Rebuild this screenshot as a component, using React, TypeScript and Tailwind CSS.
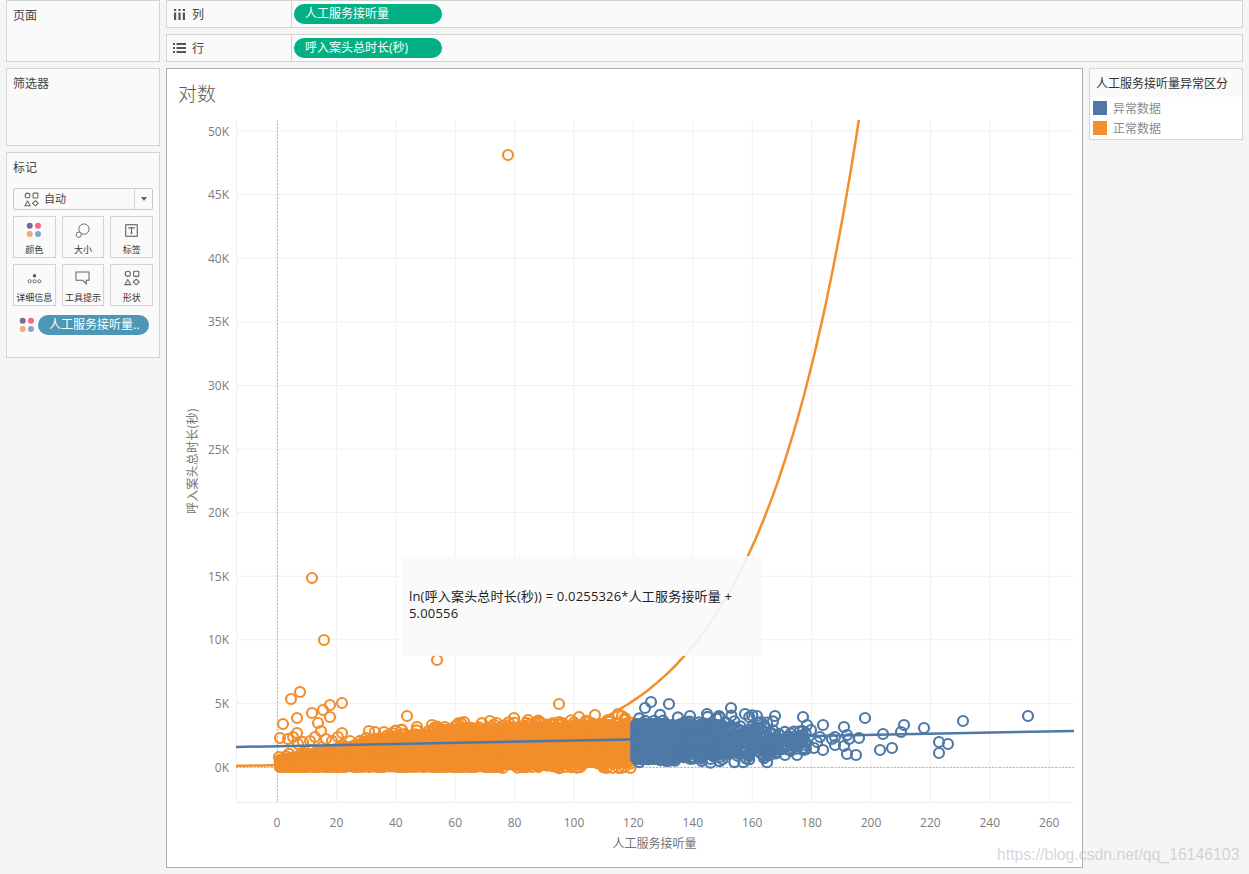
import React from "react";

const ORANGE = "#f28e2b";
const BLUE = "#4e79a7";
const FONT = "font-['Open_Sans','Noto_Sans_CJK_SC',sans-serif]";

function rng(seed: number) {
  let s = seed;
  return () => {
    s = (s * 1664525 + 1013904223) % 4294967296;
    return s / 4294967296;
  };
}

const px = (n: number) => 277 + 2.97 * n;

const orangeOutliers: number[][] = [
  [508, 155], [312, 578], [324, 640], [437, 660], [291, 699], [300, 692], [283, 724], [297, 718], [312, 713],
  [323, 710], [330, 705], [342, 703], [330, 717], [318, 723], [321, 731], [297, 733], [280, 738], [288, 739],
  [342, 733], [338, 737], [303, 742], [315, 737], [293, 737], [279, 757], [326, 739], [310, 741], [298, 744],
  [332, 741], [350, 741], [407, 716], [559, 704], [514, 718], [579, 717], [595, 715], [618, 714], [432, 725],
  [464, 722], [490, 721], [505, 725], [369, 731], [375, 732], [392, 733], [402, 730], [417, 727], [445, 727],
  [457, 725], [540, 722], [553, 723], [565, 726], [608, 720], [625, 718], [622, 716], [528, 720],
];

const blueOutliers: number[][] = [
  [651, 702], [669, 704], [645, 708], [731, 708], [865, 718], [803, 717], [823, 725], [844, 727], [904, 725],
  [901, 732], [924, 728], [883, 734], [963, 721], [1028, 716], [939, 742], [948, 744], [939, 753], [892, 748],
  [880, 750], [856, 755], [847, 754], [844, 746], [835, 745], [823, 750], [814, 748], [849, 739], [859, 738],
  [847, 735], [835, 737], [832, 739], [820, 737], [817, 742], [811, 730], [807, 725], [785, 755], [797, 755],
  [803, 750], [800, 743], [775, 716], [757, 716], [745, 714], [690, 716], [707, 714], [719, 716],
];

function bandTop(n: number) {
  if (n < 22) return 761 - (n / 22) * 13;
  if (n < 40) return 748 - ((n - 22) / 18) * 9;
  if (n < 60) return 739 - ((n - 40) / 20) * 7;
  return 732 - ((n - 60) / 60) * 5;
}

function orangePoints() {
  const r = rng(7);
  const pts: number[][] = [];
  for (let n = 1; n <= 119; n++) {
    const top = bandTop(n);
    const bottom = n <= 75 ? 767 : n <= 100 ? 762 + r() * 5 : 759 + r() * 7;
    const count = 16;
    for (let i = 0; i <= count; i++) {
      const y = top + ((bottom - top) * i) / count;
      pts.push([px(n), Math.min(767, y + (r() - 0.5) * 2)]);
    }
    if (n > 28) {
      pts.push([px(n), top - r() * 5]);
      if (r() > 0.35) pts.push([px(n), top - r() * 9]);
    } else if (r() > 0.5) {
      pts.push([px(n), top - r() * 5]);
    }
    if (n > 75 && r() > 0.6) pts.push([px(n), 767 + r() * 1.5]);
  }
  return pts;
}

function bluePoints() {
  const r = rng(23);
  const pts: number[][] = [];
  for (let n = 121; n <= 178; n++) {
    const count = n <= 150 ? 16 : n <= 168 ? 8 : 5;
    const top = n <= 150 ? 724 : n <= 168 ? 726 : 731;
    const bot = n <= 150 ? 759 : n <= 168 ? 756 : 751;
    for (let i = 0; i < count; i++) {
      const y = n <= 131 ? top + ((bot - top) * i) / (count - 1) : top + (bot - top) * r();
      pts.push([px(n), y]);
    }
    if (n <= 168 && r() > 0.45) pts.push([px(n), 723 - r() * 9]);
    if (n <= 168 && r() > 0.5) pts.push([px(n), 758 + r() * 5]);
  }
  return pts;
}

function curvePath() {
  let d = "";
  for (let n = -14; n <= 197; n += 1) {
    const v = Math.exp(4.96 + 0.03 * n);
    const y = 767 - (v / 1000) * 12.72;
    d += `${d ? "L" : "M"}${px(n).toFixed(1)} ${y.toFixed(1)}`;
  }
  return d;
}

function Chart() {
  const yTicks = Array.from({ length: 11 }, (_, i) => i * 5);
  const xTicks = Array.from({ length: 14 }, (_, i) => i * 20);
  const oPts = orangePoints();
  const bPts = bluePoints();
  return (
    <svg width={915} height={749} viewBox="167 118 915 749" className="block">
      <defs>
        <clipPath id="plot">
          <rect x="236" y="120" width="838" height="682" />
        </clipPath>
      </defs>
      {yTicks.map((t) => (
        <line key={t} x1={236} x2={1074} y1={767 - t * 12.72} y2={767 - t * 12.72} stroke="#f0f0f0" />
      ))}
      {xTicks.map((t) => (
        <line key={t} x1={px(t)} x2={px(t)} y1={120} y2={802} stroke="#f0f0f0" />
      ))}
      <line x1={236.5} x2={236.5} y1={120} y2={802} stroke="#f0f0f0" />
      <line x1={236} x2={1074} y1={802.5} y2={802.5} stroke="#ececec" />
      <line x1={277.5} x2={277.5} y1={120} y2={802} stroke="#b5b5b5" strokeDasharray="2 1.5" />
      <line x1={236} x2={1074} y1={767.5} y2={767.5} stroke="#b5b5b5" strokeDasharray="2 1.5" />

      <g fill="none" stroke={ORANGE} strokeWidth={2.2}>
        {oPts.map((p, i) => (
          <circle key={i} cx={p[0]} cy={p[1]} r={5} />
        ))}
        {orangeOutliers.map((p, i) => (
          <circle key={i} cx={p[0]} cy={p[1]} r={5} />
        ))}
      </g>
      <g fill="none" stroke={BLUE} strokeWidth={2.2}>
        {bPts.map((p, i) => (
          <circle key={i} cx={p[0]} cy={p[1]} r={5} />
        ))}
        {blueOutliers.map((p, i) => (
          <circle key={i} cx={p[0]} cy={p[1]} r={5} />
        ))}
      </g>
      <g clipPath="url(#plot)" fill="none" strokeWidth={2.5}>
        <path d={curvePath()} stroke={ORANGE} />
        <line x1={236} y1={747} x2={1074} y2={731} stroke={BLUE} />
      </g>

      <g className="font-['Open_Sans',sans-serif]" fontSize={12} fill="#7c7c7c">
        {yTicks.map((t) => (
          <text key={t} x={229} y={767 - t * 12.72 + 4.5} textAnchor="end">
            {t}K
          </text>
        ))}
        {xTicks.map((t) => (
          <text key={t} x={px(t)} y={827} textAnchor="middle">
            {t}
          </text>
        ))}
      </g>
      <g className="font-['Noto_Sans_CJK_SC',sans-serif]" fontSize={12} fill="#747474">
        <text x={654.5} y={848} textAnchor="middle">
          人工服务接听量
        </text>
        <text transform="translate(197 461) rotate(-90)" textAnchor="middle" letterSpacing={0.2}>
          呼入案头总时长(秒)
        </text>
      </g>
    </svg>
  );
}

function Panel({ title, className }: { title: string; className: string }) {
  return (
    <div className={`border border-[#d4d4d4] bg-[#fafafa] px-[6px] pt-[6px] text-[12px] leading-[18px] text-[#444] ${className}`}>
      {title}
    </div>
  );
}

function ShapesIcon({ size = 16 }: { size?: number }) {
  return (
    <svg width={size} height={size} viewBox="0 0 16 16" fill="none" stroke="#666" strokeWidth={1.1}>
      <circle cx="3.8" cy="3.8" r="2.6" />
      <rect x="9.6" y="1.2" width="5.2" height="5.2" rx="0.8" />
      <path d="M3.8 9.6 L6.6 14.6 H1 Z" />
      <path d="M12.2 9.2 L15.2 12 L12.2 14.8 L9.2 12 Z" />
    </svg>
  );
}

function Dots({ size = 16 }: { size?: number }) {
  return (
    <svg width={size} height={size} viewBox="0 0 16 16">
      <circle cx="3.7" cy="3.7" r="3" fill="#7b6a94" />
      <circle cx="12" cy="3.7" r="3" fill="#ee6a7f" />
      <circle cx="3.7" cy="12" r="3" fill="#f2a97c" />
      <circle cx="12" cy="12" r="3" fill="#84a5cd" />
    </svg>
  );
}

function MarkButton({ label, icon }: { label: string; icon: React.ReactNode }) {
  return (
    <div className="flex h-[42px] flex-col items-center border border-[#d4d4d4] bg-[#fafafa]">
      <div className="flex h-[27px] items-center justify-center">{icon}</div>
      <div className="whitespace-nowrap text-[9px] leading-[14px] text-[#333]">{label}</div>
    </div>
  );
}

function MarksPanel() {
  return (
    <div className="h-[206px] border border-[#d4d4d4] bg-[#fafafa] px-[6px] pt-[6px] text-[12px] leading-[18px] text-[#444]">
      <div>标记</div>
      <div className="mt-[11px] flex h-[22px] items-center rounded-[2px] border border-[#c8c8c8] bg-[#fafafa]">
        <div className="flex flex-1 items-center gap-[5px] pl-[10px] text-[11px]">
          <ShapesIcon size={15} />
          <span>自动</span>
        </div>
        <div className="flex h-full w-[18px] items-center justify-center border-l border-[#d4d4d4]">
          <div className="h-0 w-0 border-x-[3.5px] border-t-[4px] border-x-transparent border-t-[#666]" />
        </div>
      </div>
      <div className="mt-[6px] grid grid-cols-3 gap-[6px]">
        <MarkButton label="颜色" icon={<Dots />} />
        <MarkButton
          label="大小"
          icon={
            <svg width="15" height="15" viewBox="0 0 16 16" fill="none" stroke="#666" strokeWidth="1">
              <circle cx="9.5" cy="6.5" r="5.5" />
              <circle cx="4" cy="12.5" r="2.8" fill="#fafafa" />
            </svg>
          }
        />
        <MarkButton
          label="标签"
          icon={
            <svg width="13" height="13" viewBox="0 0 14 14" fill="none" stroke="#555" strokeWidth="1.1">
              <rect x="0.8" y="0.8" width="12.4" height="12.4" />
              <path d="M4.2 5 V4 H9.8 V5 M7 4 V10 M5.8 10 H8.2" />
            </svg>
          }
        />
        <MarkButton
          label="详细信息"
          icon={
            <svg width="15" height="13" viewBox="0 0 16 14" fill="none" stroke="#666" strokeWidth="1">
              <circle cx="8" cy="4" r="1.8" fill="#555" stroke="none" />
              <circle cx="2.8" cy="10" r="1.7" />
              <circle cx="8" cy="10" r="1.7" />
              <circle cx="13.2" cy="10" r="1.7" />
            </svg>
          }
        />
        <MarkButton
          label="工具提示"
          icon={
            <svg width="15" height="14" viewBox="0 0 16 15" fill="none" stroke="#666" strokeWidth="1.1">
              <path d="M1 1 H15 V10 H12 V14 L8.5 10 H1 Z" />
            </svg>
          }
        />
        <MarkButton label="形状" icon={<ShapesIcon />} />
      </div>
      <div className="mt-[9px] flex items-center gap-[3px] pl-[6px]">
        <Dots size={16} />
        <div className="h-[20px] w-[111px] whitespace-nowrap rounded-full bg-[#4c97b5] pl-[11px] text-[12px] leading-[20px] text-white">
          人工服务接听量..
        </div>
      </div>
    </div>
  );
}

function Shelf({ label, icon, pill }: { label: string; icon: React.ReactNode; pill: string }) {
  return (
    <div className="flex h-[28px] items-center border border-[#d4d4d4] bg-[#fafafa] text-[12px] text-[#444]">
      <div className="flex h-full w-[125px] items-center gap-[6px] border-r border-[#d4d4d4] pl-[6px]">
        <div className="flex w-[13px] justify-center">{icon}</div>
        <span className="pt-[2px]">{label}</span>
      </div>
      <div className="ml-[2px] h-[20px] w-[148px] whitespace-nowrap rounded-full bg-[#02b183] pl-[11px] text-[12px] leading-[20px] text-white">
        {pill}
      </div>
    </div>
  );
}

function Legend() {
  return (
    <div className="h-[72px] w-[154px] border border-[#d4d4d4] bg-white text-[12px]">
      <div className="flex h-[28px] items-center bg-[#fafafa] pl-[6px] pt-[1px] text-[#333]">人工服务接听量异常区分</div>
      <div className="flex flex-col gap-[6px] pl-[3px] pt-[4px] text-[#8a8a8a]">
        <div className="flex h-[14px] items-center gap-[6px]">
          <div className="h-[14px] w-[14px] bg-[#4e79a7]" />
          <span className="pt-[2px]">异常数据</span>
        </div>
        <div className="flex h-[14px] items-center gap-[6px]">
          <div className="h-[14px] w-[14px] bg-[#f28e2b]" />
          <span className="pt-[2px]">正常数据</span>
        </div>
      </div>
    </div>
  );
}

export default function App() {
  return (
    <div className={`relative flex h-[874px] w-[1249px] gap-[6px] overflow-hidden bg-[#f5f5f5] px-[6px] ${FONT}`}>
      <div className="flex w-[154px] flex-col gap-[6px]">
        <Panel title="页面" className="h-[62px]" />
        <Panel title="筛选器" className="h-[78px]" />
        <MarksPanel />
      </div>
      <div className="flex w-[1077px] flex-col gap-[6px]">
        <Shelf
          label="列"
          pill="人工服务接听量"
          icon={
            <svg width="11" height="11" viewBox="0 0 11 11" fill="#555">
              <rect x="0" y="0" width="2.2" height="2" />
              <rect x="0" y="3.5" width="2.2" height="7.5" />
              <rect x="4.4" y="0" width="2.2" height="2" />
              <rect x="4.4" y="3.5" width="2.2" height="7.5" />
              <rect x="8.8" y="0" width="2.2" height="2" />
              <rect x="8.8" y="3.5" width="2.2" height="7.5" />
            </svg>
          }
        />
        <Shelf
          label="行"
          pill="呼入案头总时长(秒)"
          icon={
            <svg width="13" height="10" viewBox="0 0 13 10" fill="#555">
              <rect x="0" y="0" width="2" height="2" />
              <rect x="3.5" y="0" width="9.5" height="2" />
              <rect x="0" y="4" width="2" height="2" />
              <rect x="3.5" y="4" width="9.5" height="2" />
              <rect x="0" y="8" width="2" height="2" />
              <rect x="3.5" y="8" width="9.5" height="2" />
            </svg>
          }
        />
        <div className="flex gap-[6px]">
          <div className="relative h-[800px] w-[917px] border border-[#b0b0b0] bg-white">
            <div className="h-[49px] pl-[11px] pt-[12px] text-[19px] font-light leading-[26px] text-[#5a5a5a]">对数</div>
            <Chart />
            <div className="absolute left-[235px] top-[487px] flex h-[100px] w-[360px] items-center bg-[#fafafa]/90 pb-[2px] pl-[7px] pr-[20px] text-[13px] leading-[17px] tracking-[0.18px] text-[#222]">
              <div>ln(呼入案头总时长(秒)) = 0.0255326*人工服务接听量 + 5.00556</div>
            </div>
          </div>
          <Legend />
        </div>
      </div>
      <div className="absolute left-[997px] top-[845px] whitespace-nowrap font-['Liberation_Sans',sans-serif] text-[15.8px] leading-[20px] text-[#c4c4c4]/70">
        https://blog.csdn.net/qq_16146103
      </div>
    </div>
  );
}
